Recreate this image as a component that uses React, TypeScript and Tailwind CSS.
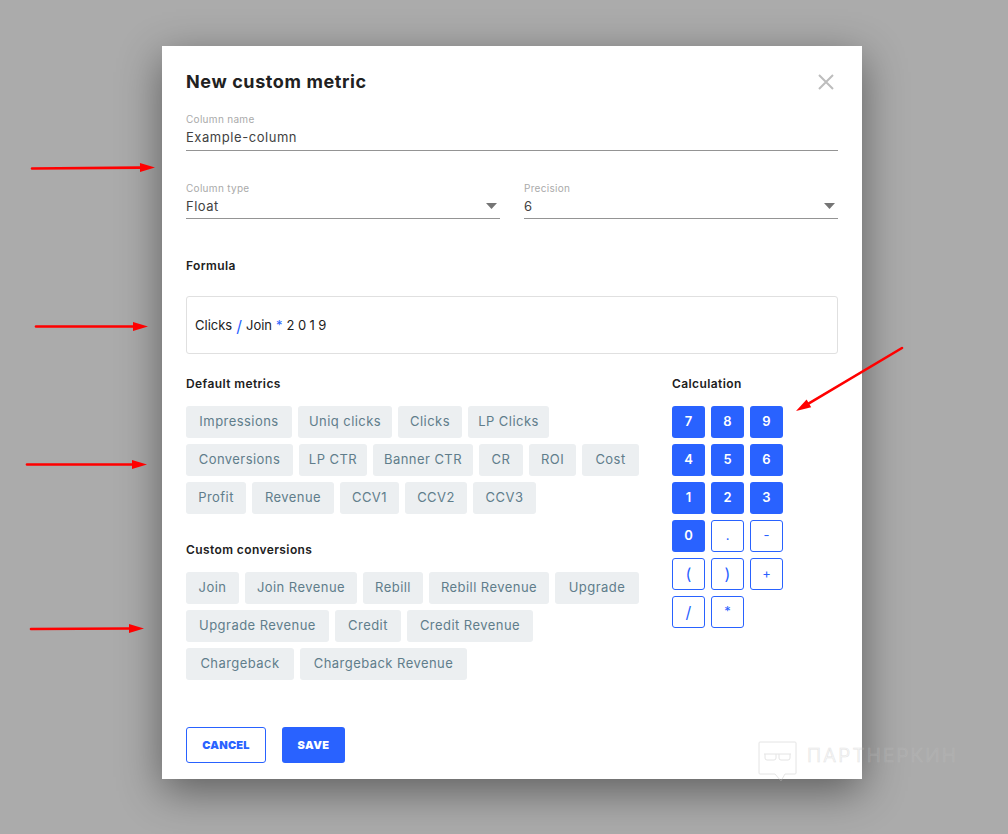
import React from 'react';

type Tag = { label: string; width: string };

const defaultMetrics: Tag[] = [
  { label: 'Impressions', width: 'w-[106px]' },
  { label: 'Uniq clicks', width: 'w-[94px]' },
  { label: 'Clicks', width: 'w-[64px]' },
  { label: 'LP Clicks', width: 'w-[81px]' },
  { label: 'Conversions', width: 'w-[107px]' },
  { label: 'LP CTR', width: 'w-[68px]' },
  { label: 'Banner CTR', width: 'w-[100px]' },
  { label: 'CR', width: 'w-[44px]' },
  { label: 'ROI', width: 'w-[47px]' },
  { label: 'Cost', width: 'w-[57px]' },
  { label: 'Profit', width: 'w-[60px]' },
  { label: 'Revenue', width: 'w-[82px]' },
  { label: 'CCV1', width: 'w-[59px]' },
  { label: 'CCV2', width: 'w-[62px]' },
  { label: 'CCV3', width: 'w-[63px]' },
];

const customConversions: Tag[] = [
  { label: 'Join', width: 'w-[53px]' },
  { label: 'Join Revenue', width: 'w-[112px]' },
  { label: 'Rebill', width: 'w-[60px]' },
  { label: 'Rebill Revenue', width: 'w-[120px]' },
  { label: 'Upgrade', width: 'w-[84px]' },
  { label: 'Upgrade Revenue', width: 'w-[143px]' },
  { label: 'Credit', width: 'w-[66px]' },
  { label: 'Credit Revenue', width: 'w-[126px]' },
  { label: 'Chargeback', width: 'w-[108px]' },
  { label: 'Chargeback Revenue', width: 'w-[167px]' },
];

const keys = [
  { k: '7', solid: true },
  { k: '8', solid: true },
  { k: '9', solid: true },
  { k: '4', solid: true },
  { k: '5', solid: true },
  { k: '6', solid: true },
  { k: '1', solid: true },
  { k: '2', solid: true },
  { k: '3', solid: true },
  { k: '0', solid: true },
  { k: '.', solid: false },
  { k: '-', solid: false },
  { k: '(', solid: false, big: true },
  { k: ')', solid: false, big: true },
  { k: '+', solid: false },
  { k: '/', solid: false, big: true },
  { k: '*', solid: false },
];

function TagList({ items }: { items: Tag[] }) {
  return (
    <div className="flex flex-wrap gap-x-[6px] gap-y-[6px]">
      {items.map((t) => (
        <div
          key={t.label}
          className={`${t.width} h-8 rounded-[3px] bg-[#eceff1] text-[#607d8b] text-[13px] tracking-[0.45px] flex items-center justify-center`}
        >
          {t.label}
        </div>
      ))}
    </div>
  );
}

function Select({ label, value }: { label: string; value: string }) {
  return (
    <div className="w-[314px] border-b border-[#949494] h-[38px]">
      <div className="text-[10px] leading-[14px] tracking-[0.3px] text-[#aaaaaa]">{label}</div>
      <div className="flex items-center justify-between mt-[2px] pr-[3px]">
        <span className="text-[13px] leading-[18px] tracking-[0.5px] text-[#424242]">{value}</span>
        <svg width="11" height="6" viewBox="0 0 11 6">
          <path d="M0 0h11L5.5 6z" fill="#757575" />
        </svg>
      </div>
    </div>
  );
}

function Arrow({ x1, y1, x2, y2 }: { x1: number; y1: number; x2: number; y2: number }) {
  const a = Math.atan2(y2 - y1, x2 - x1);
  const len = 15;
  const w = 4.5;
  const bx = x2 - len * Math.cos(a);
  const by = y2 - len * Math.sin(a);
  const nx = -Math.sin(a) * w;
  const ny = Math.cos(a) * w;
  return (
    <g>
      <line x1={x1} y1={y1} x2={bx} y2={by} stroke="#ff0000" strokeWidth="2.6" strokeLinecap="round" />
      <polygon points={`${x2},${y2} ${bx + nx},${by + ny} ${bx - nx},${by - ny}`} fill="#ff0000" />
    </g>
  );
}

export default function App() {
  return (
    <div
      className="relative w-[1008px] h-[834px] overflow-hidden bg-[#ababab] pl-[162px] pt-[46px]"
      style={{ fontFamily: 'Inter, "Noto Sans", sans-serif' }}
    >
      <div className="relative w-[700px] h-[733px] bg-white px-6 shadow-[0_12px_40px_rgba(0,0,0,0.45)]">
        <div className="flex items-center justify-between pt-6">
          <h1 className="text-[18px] leading-6 tracking-[0.6px] font-bold text-[#212121]">New custom metric</h1>
          <button className="mr-[4px]">
            <svg width="16" height="16" viewBox="0 0 16 16" className="block">
              <path d="M1 1l14 14M15 1L1 15" stroke="#bdbdbd" strokeWidth="2" />
            </svg>
          </button>
        </div>

        <div className="mt-[18px] border-b border-[#949494] h-[39px]">
          <div className="text-[10px] leading-[14px] tracking-[0.3px] text-[#aaaaaa]">Column name</div>
          <div className="text-[13px] leading-[18px] tracking-[0.55px] mt-[2px] text-[#424242]">Example-column</div>
        </div>

        <div className="flex gap-6 mt-[30px]">
          <Select label="Column type" value="Float" />
          <Select label="Precision" value="6" />
        </div>

        <div className="mt-[39px] text-[12px] leading-[16px] tracking-[0.4px] font-semibold text-[#212121]">Formula</div>

        <div className="mt-[22px] h-[58px] rounded-[3px] border border-[#e0e0e0] flex items-center pt-[1px] pl-2 text-[13px] text-[#212121]">
          <span>Clicks</span>
          <span className="text-[#2962ff] text-[16px] leading-4 ml-[4px]">/</span>
          <span className="ml-[4px]">Join</span>
          <span className="text-[#2962ff] ml-[4px]">*</span>
          <span className="ml-[4px] tracking-[3.4px]">2019</span>
        </div>

        <div className="flex mt-[22px]">
          <div className="w-[486px]">
            <div className="text-[12px] leading-[16px] tracking-[0.4px] font-semibold text-[#212121]">Default metrics</div>
            <div className="mt-[14px] w-[460px]">
              <TagList items={defaultMetrics} />
            </div>
            <div className="mt-[28px] text-[12px] leading-[16px] tracking-[0.4px] font-semibold text-[#212121]">Custom conversions</div>
            <div className="mt-[14px] w-[460px]">
              <TagList items={customConversions} />
            </div>
          </div>
          <div>
            <div className="text-[12px] leading-[16px] tracking-[0.4px] font-semibold text-[#212121]">Calculation</div>
            <div className="mt-[14px] grid grid-cols-[33px_33px_33px] auto-rows-[32px] gap-x-[6px] gap-y-[6px]">
              {keys.map(({ k, solid, big }) => (
                <div
                  key={k}
                  className={
                    solid
                      ? 'rounded-[3px] bg-[#2962ff] text-white text-[13px] font-semibold flex items-center justify-center'
                      : big
                        ? 'rounded-[3px] border border-[#2962ff] text-[#2962ff] text-[16px] flex items-center justify-center'
                        : 'rounded-[3px] border border-[#2962ff] text-[#2962ff] text-[13px] flex items-center justify-center'
                  }
                >
                  {k}
                </div>
              ))}
            </div>
          </div>
        </div>

        <div className="flex gap-4 mt-[47px]">
          <button className="w-20 h-9 rounded-[3px] border border-[#2962ff] text-[#2962ff] text-[11px] tracking-[0.2px] font-black">
            CANCEL
          </button>
          <button className="w-[63px] h-9 rounded-[3px] bg-[#2962ff] text-white text-[11px] tracking-[0.4px] font-black">SAVE</button>
        </div>
      </div>

      {/* red arrows drawn over the screenshot */}
      <svg className="absolute left-0 top-0 pointer-events-none" width="1008" height="834" viewBox="0 0 1008 834">
        <Arrow x1={32} y1={168.5} x2={155} y2={167.5} />
        <Arrow x1={36} y1={326.5} x2={148} y2={326.5} />
        <Arrow x1={27} y1={464.5} x2={147} y2={464.5} />
        <Arrow x1={31} y1={629} x2={144} y2={628.5} />
        <Arrow x1={902} y1={348} x2={796} y2={411} />
      </svg>

      {/* watermark */}
      <div className="absolute left-[758px] top-[741px] flex items-start pointer-events-none opacity-40">
        <svg width="39" height="41" viewBox="0 0 39 41" fill="none" stroke="#bebebe" strokeWidth="1">
          <path d="M2 1h35a1 1 0 0 1 1 1v30a1 1 0 0 1-1 1H27l-4 7-6-7H2a1 1 0 0 1-1-1V2a1 1 0 0 1 1-1z" />
          <path d="M6 13h27M7 13v4a2 2 0 0 0 2 2h7a2 2 0 0 0 2-2v-4M21 13v4a2 2 0 0 0 2 2h7a2 2 0 0 0 2-2v-4" />
        </svg>
        <span className="ml-[10px] mt-[3px] text-[19px] leading-6 font-light tracking-[2.2px] text-transparent [-webkit-text-stroke:0.7px_#bebebe]">
          ПАРТНЕРКИН
        </span>
      </div>
    </div>
  );
}
